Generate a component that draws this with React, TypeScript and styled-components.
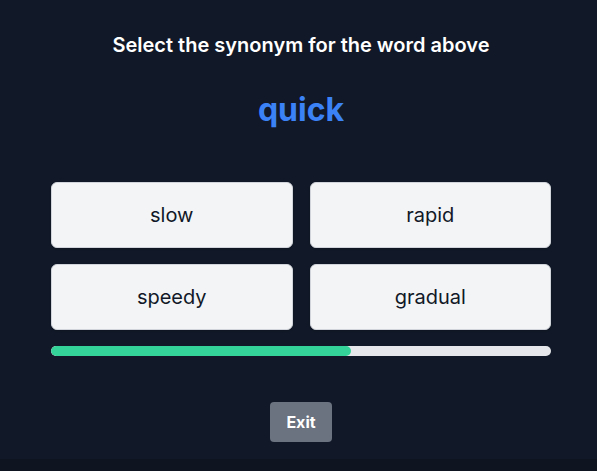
import React from "react";
import styled, { createGlobalStyle } from "styled-components";

const Global = createGlobalStyle`
  html, body { margin: 0; padding: 0; background: #0e1420; }
  body { font-family: Inter, "Noto Sans", sans-serif; }
`;

const Page = styled.div`
  background: #111827;
  padding: 31px 0 17px 5px;
  display: flex;
  flex-direction: column;
  align-items: center;
`;

const Title = styled.h2`
  margin: 0;
  font-size: 20px;
  line-height: 28px;
  font-weight: 600;
  color: #ffffff;
`;

const Word = styled.div`
  margin-top: 31px;
  font-size: 32px;
  line-height: 40px;
  font-weight: 700;
  color: #3b82f6;
`;

const Grid = styled.div`
  margin-top: 52px;
  width: 500px;
  display: grid;
  grid-template-columns: 1fr 1fr;
  gap: 16px 17px;
`;

const Option = styled.button`
  height: 66px;
  background: #f3f4f6;
  border: 1px solid #d1d5db;
  border-radius: 6px;
  box-shadow: 0 1px 2px rgba(0, 0, 0, 0.15);
  font-family: Inter, sans-serif;
  font-size: 20px;
  color: #111827;
  cursor: pointer;
`;

const Track = styled.div`
  margin-top: 16px;
  width: 500px;
  height: 10px;
  border-radius: 5px;
  background: #e5e7eb;
  overflow: hidden;
`;

const Fill = styled.div`
  height: 100%;
  background: #34d399;
  border-radius: 5px;
`;

const ExitButton = styled.button`
  margin-top: 46px;
  width: 62px;
  height: 40px;
  border: none;
  border-radius: 4px;
  background: #6b7280;
  color: #ffffff;
  font-family: Inter, sans-serif;
  font-weight: 700;
  font-size: 16px;
  cursor: pointer;
`;

const options = ["slow", "rapid", "speedy", "gradual"];

export default function App() {
  const progress = 60;
  return (
    <>
      <Global />
      <Page>
        <Title>Select the synonym for the word above</Title>
        <Word>quick</Word>
        <Grid>
          {options.map((o) => (
            <Option key={o}>{o}</Option>
          ))}
        </Grid>
        <Track>
          <Fill style={{ width: `${progress}%` }} />
        </Track>
        <ExitButton>Exit</ExitButton>
      </Page>
    </>
  );
}
